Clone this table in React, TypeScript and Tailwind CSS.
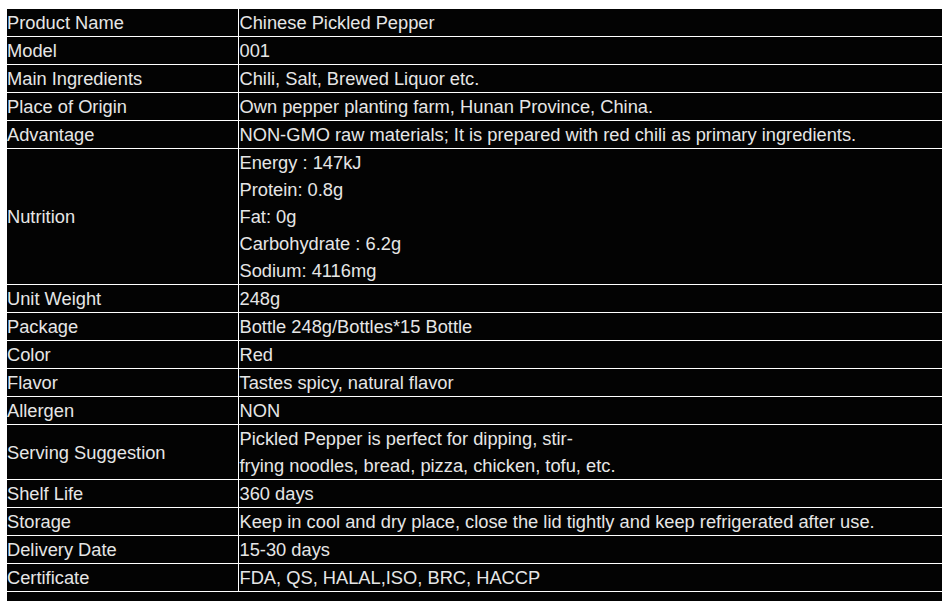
const rows: { label: string; value: string[] }[] = [
  { label: "Product Name", value: ["Chinese Pickled Pepper"] },
  { label: "Model", value: ["001"] },
  { label: "Main Ingredients", value: ["Chili, Salt, Brewed Liquor etc."] },
  { label: "Place of Origin", value: ["Own pepper planting farm, Hunan Province, China."] },
  {
    label: "Advantage",
    value: ["NON-GMO raw materials; It is prepared with red chili as primary ingredients."],
  },
  {
    label: "Nutrition",
    value: ["Energy : 147kJ", "Protein: 0.8g", "Fat: 0g", "Carbohydrate : 6.2g", "Sodium: 4116mg"],
  },
  { label: "Unit Weight", value: ["248g"] },
  { label: "Package", value: ["Bottle 248g/Bottles*15 Bottle"] },
  { label: "Color", value: ["Red"] },
  { label: "Flavor", value: ["Tastes spicy, natural flavor"] },
  { label: "Allergen", value: ["NON"] },
  {
    label: "Serving Suggestion",
    value: ["Pickled Pepper is perfect for dipping, stir-", "frying noodles, bread, pizza, chicken, tofu, etc."],
  },
  { label: "Shelf Life", value: ["360 days"] },
  {
    label: "Storage",
    value: ["Keep in cool and dry place, close the lid tightly and keep refrigerated after use."],
  },
  { label: "Delivery Date", value: ["15-30 days"] },
  { label: "Certificate", value: ["FDA, QS, HALAL,ISO, BRC, HACCP"] },
];

export default function App() {
  return (
    <main className="min-h-[601px] bg-white pt-[9px] pl-[7px] font-['Liberation_Sans',Arial,sans-serif] text-[18.3px] leading-[27px] text-[#e6e6e6]">
      <table className="w-[935px] border-collapse bg-[#030303]">
        <tbody>
          {rows.map((row) => (
            <tr key={row.label} className="border-b border-white">
              <td className="w-[231px] border-r border-white pl-0 align-middle">{row.label}</td>
              <td className="pl-[1px] align-middle">
                {row.value.map((line) => (
                  <div key={line}>{line}</div>
                ))}
              </td>
            </tr>
          ))}
          {/* next row is cut off by the bottom of the window */}
          <tr>
            <td colSpan={2} className="h-[27px]"></td>
          </tr>
        </tbody>
      </table>
    </main>
  );
}
